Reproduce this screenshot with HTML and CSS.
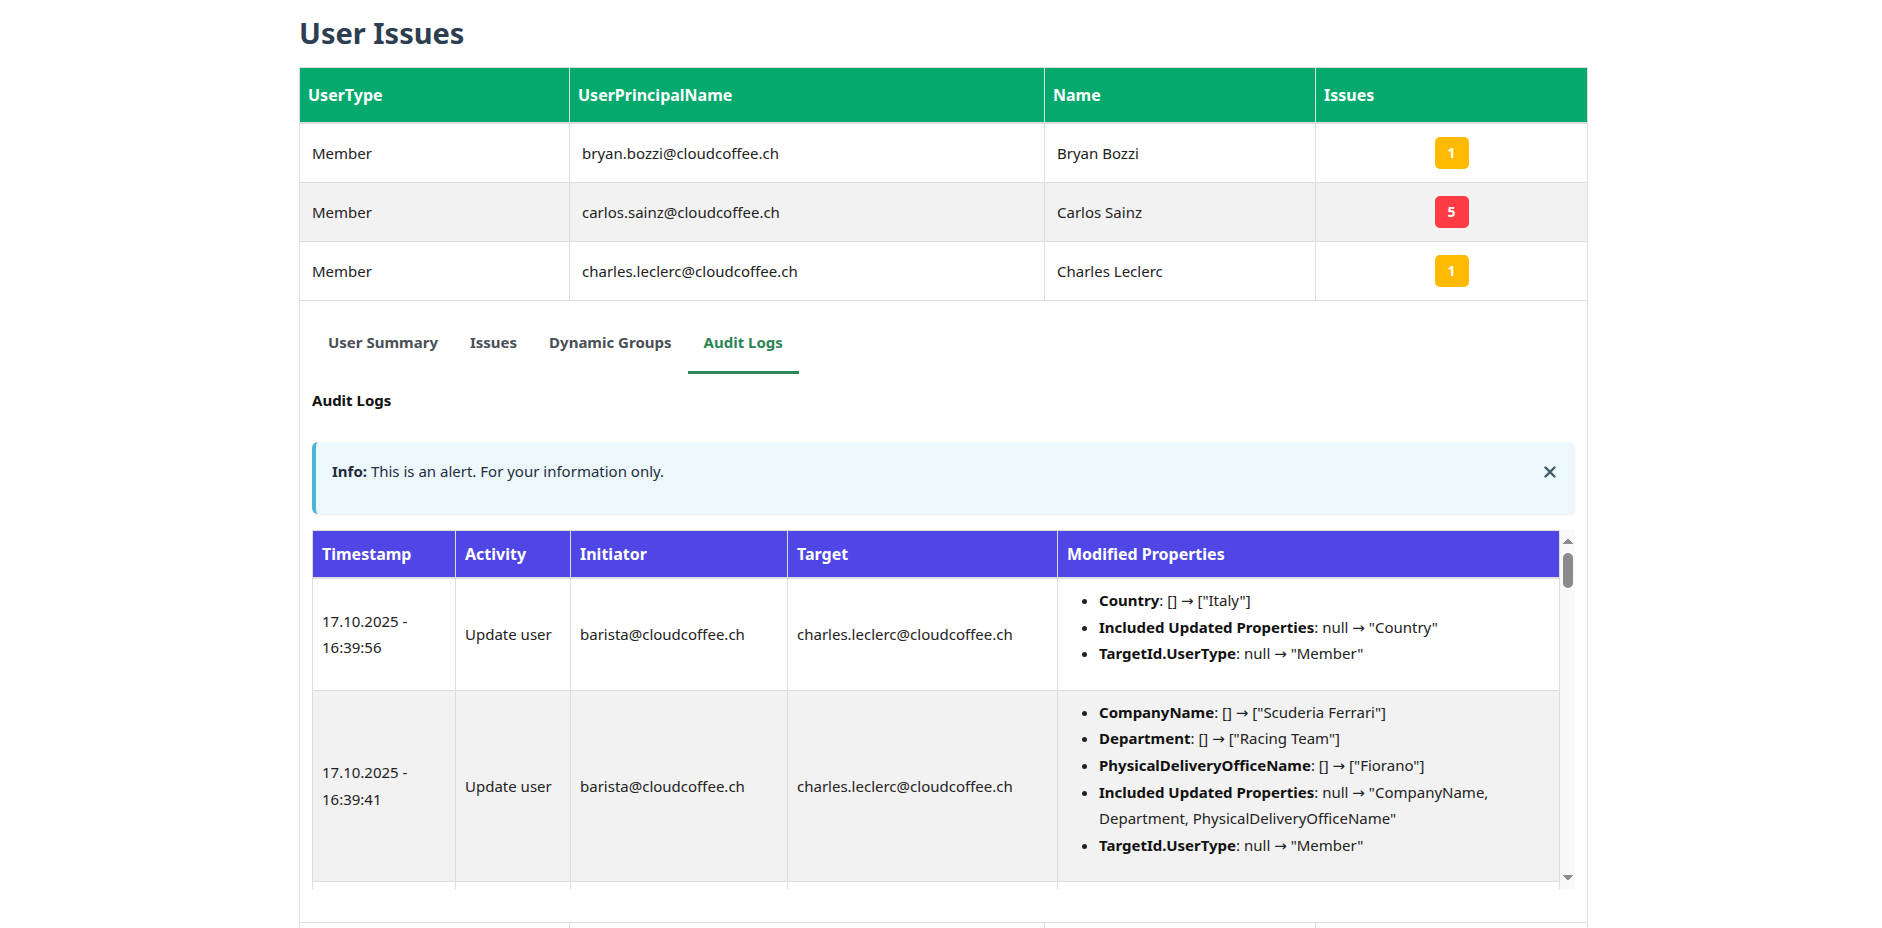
FILE: index.html
```html
<!DOCTYPE html>
<html lang="en">
<head>
<meta charset="utf-8">
<title>User Issues</title>
<link rel="stylesheet" href="styles.css">
</head>
<body>
<main class="page">
  <h1 class="page-title">User Issues</h1>
  <table class="users">
    <colgroup>
      <col class="c-type"><col class="c-upn"><col class="c-name"><col class="c-issues">
    </colgroup>
    <thead>
      <tr><th>UserType</th><th>UserPrincipalName</th><th>Name</th><th>Issues</th></tr>
    </thead>
    <tbody>
      <tr><td>Member</td><td>bryan.bozzi@cloudcoffee.ch</td><td>Bryan Bozzi</td><td class="issues"><span class="badge warn">1</span></td></tr>
      <tr class="alt"><td>Member</td><td>carlos.sainz@cloudcoffee.ch</td><td>Carlos Sainz</td><td class="issues"><span class="badge danger">5</span></td></tr>
      <tr><td>Member</td><td>charles.leclerc@cloudcoffee.ch</td><td>Charles Leclerc</td><td class="issues"><span class="badge warn">1</span></td></tr>
      <tr class="detail">
        <td class="detail-cell" colspan="4">
          <nav class="tabs">
            <span class="tab">User Summary</span>
            <span class="tab">Issues</span>
            <span class="tab">Dynamic Groups</span>
            <span class="tab active">Audit Logs</span>
          </nav>
          <h4 class="panel-title">Audit Logs</h4>
          <div class="alert">
            <div class="alert-text"><b>Info:</b> This is an alert. For your information only.</div>
            <span class="alert-close" aria-label="Close"><svg viewBox="0 0 12 12" width="12" height="12"><path d="M1.5 1.5 L10.5 10.5 M10.5 1.5 L1.5 10.5" stroke="currentColor" stroke-width="2.4" stroke-linecap="round"/></svg></span>
          </div>
          <div class="log-box">
            <div class="log-scroll">
              <table class="logs">
                <colgroup>
                  <col class="l-time"><col class="l-act"><col class="l-init"><col class="l-target"><col class="l-props">
                </colgroup>
                <thead>
                  <tr><th>Timestamp</th><th>Activity</th><th>Initiator</th><th>Target</th><th>Modified Properties</th></tr>
                </thead>
                <tbody>
                  <tr>
                    <td>17.10.2025 - 16:39:56</td><td>Update user</td><td>barista@cloudcoffee.ch</td><td>charles.leclerc@cloudcoffee.ch</td>
                    <td><ul>
                      <li><b>Country</b>: [] → ["Italy"]</li>
                      <li><b>Included Updated Properties</b>: null → "Country"</li>
                      <li><b>TargetId.UserType</b>: null → "Member"</li>
                    </ul></td>
                  </tr>
                  <tr>
                    <td>17.10.2025 - 16:39:41</td><td>Update user</td><td>barista@cloudcoffee.ch</td><td>charles.leclerc@cloudcoffee.ch</td>
                    <td><ul>
                      <li><b>CompanyName</b>: [] → ["Scuderia Ferrari"]</li>
                      <li><b>Department</b>: [] → ["Racing Team"]</li>
                      <li><b>PhysicalDeliveryOfficeName</b>: [] → ["Fiorano"]</li>
                      <li><b>Included Updated Properties</b>: null → "CompanyName, Department, PhysicalDeliveryOfficeName"</li>
                      <li><b>TargetId.UserType</b>: null → "Member"</li>
                    </ul></td>
                  </tr>
                  <tr>
                    <td>17.10.2025 - 16:39:18</td><td>Update user</td><td>barista@cloudcoffee.ch</td><td>charles.leclerc@cloudcoffee.ch</td>
                    <td><ul>
                      <li><b>JobTitle</b>: [] → ["Driver"]</li>
                      <li><b>Included Updated Properties</b>: null → "JobTitle"</li>
                      <li><b>TargetId.UserType</b>: null → "Member"</li>
                    </ul></td>
                  </tr>
                  <tr>
                    <td>17.10.2025 - 16:38:57</td><td>Update user</td><td>barista@cloudcoffee.ch</td><td>charles.leclerc@cloudcoffee.ch</td>
                    <td><ul>
                      <li><b>City</b>: [] → ["Maranello"]</li>
                      <li><b>State</b>: [] → ["Emilia-Romagna"]</li>
                      <li><b>PostalCode</b>: [] → ["41053"]</li>
                      <li><b>StreetAddress</b>: [] → ["Via Abetone Inferiore 4"]</li>
                      <li><b>Included Updated Properties</b>: null → "City, State, PostalCode, StreetAddress"</li>
                      <li><b>TargetId.UserType</b>: null → "Member"</li>
                    </ul></td>
                  </tr>
                  <tr>
                    <td>17.10.2025 - 16:38:30</td><td>Update user</td><td>barista@cloudcoffee.ch</td><td>charles.leclerc@cloudcoffee.ch</td>
                    <td><ul>
                      <li><b>UsageLocation</b>: [] → ["IT"]</li>
                      <li><b>Included Updated Properties</b>: null → "UsageLocation"</li>
                      <li><b>TargetId.UserType</b>: null → "Member"</li>
                    </ul></td>
                  </tr>
                  <tr>
                    <td>17.10.2025 - 16:37:48</td><td>Change user license</td><td>barista@cloudcoffee.ch</td><td>charles.leclerc@cloudcoffee.ch</td>
                    <td><ul>
                      <li><b>AssignedLicense</b>: [] → ["ENTERPRISEPACK"]</li>
                      <li><b>AssignedPlan</b>: [] → ["Exchange", "SharePoint", "Teams"]</li>
                      <li><b>Included Updated Properties</b>: null → "AssignedLicense, AssignedPlan"</li>
                      <li><b>TargetId.UserType</b>: null → "Member"</li>
                    </ul></td>
                  </tr>
                  <tr>
                    <td>17.10.2025 - 16:37:12</td><td>Add member to group</td><td>barista@cloudcoffee.ch</td><td>charles.leclerc@cloudcoffee.ch</td>
                    <td><ul>
                      <li><b>Group.ObjectID</b>: null → "a3f1c2d4-5b6e-4f70-8a91-2b3c4d5e6f70"</li>
                      <li><b>Group.DisplayName</b>: null → "Scuderia Ferrari Drivers"</li>
                    </ul></td>
                  </tr>
                  <tr>
                    <td>17.10.2025 - 16:36:55</td><td>Add member to group</td><td>barista@cloudcoffee.ch</td><td>charles.leclerc@cloudcoffee.ch</td>
                    <td><ul>
                      <li><b>Group.ObjectID</b>: null → "7c2e9b10-4d3a-4e5f-9b6c-1a2b3c4d5e6f"</li>
                      <li><b>Group.DisplayName</b>: null → "All Employees"</li>
                    </ul></td>
                  </tr>
                  <tr>
                    <td>17.10.2025 - 16:36:40</td><td>Update user</td><td>barista@cloudcoffee.ch</td><td>charles.leclerc@cloudcoffee.ch</td>
                    <td><ul>
                      <li><b>MobilePhone</b>: [] → ["+39 0536 949111"]</li>
                      <li><b>Included Updated Properties</b>: null → "MobilePhone"</li>
                      <li><b>TargetId.UserType</b>: null → "Member"</li>
                    </ul></td>
                  </tr>
                  <tr>
                    <td>17.10.2025 - 16:36:18</td><td>Update user</td><td>barista@cloudcoffee.ch</td><td>charles.leclerc@cloudcoffee.ch</td>
                    <td><ul>
                      <li><b>GivenName</b>: [] → ["Charles"]</li>
                      <li><b>Surname</b>: [] → ["Leclerc"]</li>
                      <li><b>DisplayName</b>: ["charles.leclerc"] → ["Charles Leclerc"]</li>
                      <li><b>Included Updated Properties</b>: null → "GivenName, Surname, DisplayName"</li>
                      <li><b>TargetId.UserType</b>: null → "Member"</li>
                    </ul></td>
                  </tr>
                  <tr>
                    <td>17.10.2025 - 16:35:41</td><td>Update user</td><td>barista@cloudcoffee.ch</td><td>charles.leclerc@cloudcoffee.ch</td>
                    <td><ul>
                      <li><b>AccountEnabled</b>: [false] → [true]</li>
                      <li><b>Included Updated Properties</b>: null → "AccountEnabled"</li>
                      <li><b>TargetId.UserType</b>: null → "Member"</li>
                    </ul></td>
                  </tr>
                  <tr>
                    <td>17.10.2025 - 16:35:20</td><td>Add user</td><td>barista@cloudcoffee.ch</td><td>charles.leclerc@cloudcoffee.ch</td>
                    <td><ul>
                      <li><b>AccountEnabled</b>: [] → [true]</li>
                      <li><b>DisplayName</b>: [] → ["charles.leclerc"]</li>
                      <li><b>MailNickname</b>: [] → ["charles.leclerc"]</li>
                      <li><b>UserPrincipalName</b>: [] → ["charles.leclerc@cloudcoffee.ch"]</li>
                      <li><b>UserType</b>: [] → ["Member"]</li>
                    </ul></td>
                  </tr>
                </tbody>
              </table>
            </div>
            <div class="scrollbar" aria-hidden="true">
              <span class="sb-arrow sb-up"></span>
              <span class="sb-track"><span class="sb-thumb"></span></span>
              <span class="sb-arrow sb-down"></span>
            </div>
          </div>
        </td>
      </tr>
      <tr><td>Member</td><td>lewis.hamilton@cloudcoffee.ch</td><td>Lewis Hamilton</td><td class="issues"><span class="badge warn">2</span></td></tr>
    </tbody>
  </table>
</main>
</body>
</html>
```

FILE: styles.css
```css
html {
  overflow: hidden;
}

body {
  margin: 0;
  background: #ffffff;
  color: #222222;
  font-family: "Noto Sans", "Open Sans", "DejaVu Sans", sans-serif;
}

.page {
  width: 1292px;
  margin: 0 auto;
  padding-left: 4px;
  box-sizing: border-box;
}

.page-title {
  margin: 15px 0 16px;
  font-size: 29px;
  line-height: 36px;
  font-weight: 700;
  color: #2c3e50;
}

/* ---------- users table ---------- */
.users {
  width: 100%;
  border-collapse: collapse;
  table-layout: fixed;
  border: 1px solid #dddddd;
  font-size: 15px;
}

.users .c-type { width: 270px; }
.users .c-upn { width: 475px; }
.users .c-name { width: 271px; }
.users .c-issues { width: 272px; }

.users > thead th {
  background: #04aa6d;
  color: #ffffff;
  font-size: 16px;
  font-weight: 700;
  text-align: left;
  padding: 16px 8px;
  line-height: 22px;
  border: 1px solid #dddddd;
  border-bottom: 2px solid #dddddd;
}

.users > tbody > tr > td {
  padding: 13px 12px;
  line-height: 22px;
  border: 1px solid #dddddd;
  vertical-align: middle;
  color: #222222;
}

.users > tbody > tr.alt > td {
  background: #f2f2f2;
}

.users > tbody > tr > td.issues {
  text-align: center;
}

.badge {
  display: block;
  width: 34px;
  height: 32px;
  margin: 0 auto;
  border-radius: 5px;
  color: #ffffff;
  font-size: 14px;
  font-weight: 700;
  line-height: 32px;
  text-align: center;
}

.badge.warn { background: #ffb900; }
.badge.danger { background: #ff3b46; }

.users > tbody > tr.detail > td.detail-cell {
  padding: 11px 12px 12px;
  background: #ffffff;
}

/* ---------- tabs ---------- */
.tabs {
  display: flex;
}

.tab {
  padding: 19px 16px 18px;
  border-bottom: 3px solid transparent;
  font-size: 15px;
  font-weight: 700;
  line-height: 22px;
  color: #495057;
}

.tab.active {
  color: #2e8555;
  border-bottom-color: #2e8555;
}

.panel-title {
  margin: 15px 0 31px;
  font-size: 15px;
  line-height: 22px;
  font-weight: 700;
  color: #111111;
}

/* ---------- alert ---------- */
.alert {
  display: flex;
  align-items: flex-start;
  margin: 0 0 16px;
  padding: 17px 19px 31px 16px;
  background: #edf8fd;
  border-left: 4px solid #4fb3d9;
  border-radius: 6px;
  box-shadow: 0 1px 2px rgba(0, 0, 0, 0.08);
  font-size: 15px;
  line-height: 24px;
  color: #1f2d3d;
}

.alert-text {
  flex: 1;
}

.alert-close {
  display: block;
  width: 12px;
  height: 12px;
  margin-top: 7px;
  color: #3d5a66;
}

.alert-close svg {
  display: block;
}

/* ---------- audit log box ---------- */
.log-box {
  display: flex;
  height: 359px;
  margin-bottom: 21px;
}

.log-scroll {
  flex: 1;
  min-width: 0;
  overflow-y: auto;
  scrollbar-width: none;
}

.scrollbar {
  flex: none;
  width: 15px;
  display: flex;
  flex-direction: column;
  background: #f9f9f9;
}

.sb-arrow {
  flex: none;
  height: 16px;
}

.sb-up {
  background:
    linear-gradient(to top left, #8a8a8a 50%, transparent 50%) no-repeat 3px 8px / 5px 6px,
    linear-gradient(to top right, #8a8a8a 50%, transparent 50%) no-repeat 8px 8px / 5px 6px;
}

.sb-down {
  background:
    linear-gradient(to bottom left, #8a8a8a 50%, transparent 50%) no-repeat 3px 2px / 5px 6px,
    linear-gradient(to bottom right, #8a8a8a 50%, transparent 50%) no-repeat 8px 2px / 5px 6px;
}

.sb-track {
  flex: 1;
  padding: 7px 2px 0 3px;
}

.sb-thumb {
  display: block;
  height: 35px;
  border-radius: 5px;
  background: #8b8b8b;
}

/* ---------- audit log table ---------- */
.logs {
  width: 100%;
  border-collapse: collapse;
  table-layout: fixed;
  font-size: 15px;
}

.logs .l-time { width: 143px; }
.logs .l-act { width: 115px; }
.logs .l-init { width: 217px; }
.logs .l-target { width: 270px; }

.logs th {
  background: #4f46e5;
  color: #ffffff;
  font-size: 16px;
  font-weight: 700;
  text-align: left;
  padding: 12px 9px;
  line-height: 22px;
  border: 1px solid #dddddd;
  border-bottom: 2px solid #dddddd;
}

.logs td {
  padding: 8px 9px;
  line-height: 26.6px;
  border: 1px solid #dddddd;
  vertical-align: middle;
  color: #222222;
}

.logs tbody tr:nth-child(even) td {
  background: #f2f2f2;
}

.logs ul {
  margin: 0 0 15px;
  padding-left: 32px;
}

.logs li b {
  color: #111111;
}
```
